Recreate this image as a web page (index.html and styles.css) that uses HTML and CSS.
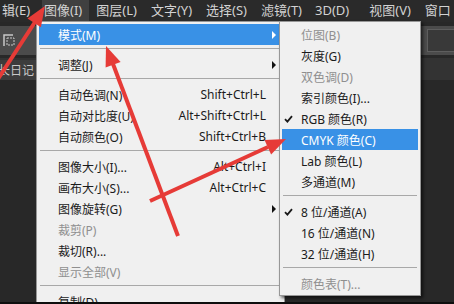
FILE: index.html
```html
<!DOCTYPE html>
<html lang="zh-CN">
<head>
  <meta charset="UTF-8">
  <meta name="viewport" content="width=device-width, initial-scale=1.0">
  <title>图像 - 模式</title>
  <link rel="stylesheet" href="styles.css">
</head>
<body>
  <div class="app">
    <nav class="menubar">
      <span class="bar-item first">辑(E)</span>
      <span class="bar-item active">图像(I)</span>
      <span class="bar-item">图层(L)</span>
      <span class="bar-item">文字(Y)</span>
      <span class="bar-item">选择(S)</span>
      <span class="bar-item tight">滤镜(T)</span>
      <span class="bar-item wide">3D(D)</span>
      <span class="bar-item">视图(V)</span>
      <span class="bar-item">窗口</span>
    </nav>

    <div class="options">
      <svg class="tool-icon" width="12" height="14" viewBox="0 0 12 14">
        <path d="M1 12 V1 H10" fill="none" stroke="#c8c8c8" stroke-width="1.5"/>
        <rect x="4" y="4" width="7" height="7" fill="none" stroke="#c8c8c8" stroke-width="1" stroke-dasharray="2 1"/>
      </svg>
      <span class="options-fill"></span>
      <span class="options-box"></span>
    </div>

    <div class="tabs">
      <span class="tab">长日记</span>
    </div>

    <div class="workspace"></div>

    <!-- 图像 menu -->
    <div class="menu main-menu">
      <div class="row hot"><span class="label">模式(M)</span><span class="caret"></span></div>
      <div class="sep"></div>
      <div class="row"><span class="label">调整(J)</span><span class="caret"></span></div>
      <div class="sep"></div>
      <div class="row"><span class="label">自动色调(N)</span><span class="key">Shift+Ctrl+L</span></div>
      <div class="row"><span class="label">自动对比度(U)</span><span class="key">Alt+Shift+Ctrl+L</span></div>
      <div class="row"><span class="label">自动颜色(O)</span><span class="key">Shift+Ctrl+B</span></div>
      <div class="sep"></div>
      <div class="row"><span class="label">图像大小(I)...</span><span class="key">Alt+Ctrl+I</span></div>
      <div class="row"><span class="label">画布大小(S)...</span><span class="key">Alt+Ctrl+C</span></div>
      <div class="row"><span class="label">图像旋转(G)</span><span class="caret"></span></div>
      <div class="row off"><span class="label">裁剪(P)</span></div>
      <div class="row"><span class="label">裁切(R)...</span></div>
      <div class="row off"><span class="label">显示全部(V)</span></div>
      <div class="sep"></div>
      <div class="row"><span class="label">复制(D)...</span></div>
    </div>

    <!-- 模式 submenu -->
    <div class="menu sub-menu">
      <div class="row off"><span class="check"></span><span class="label">位图(B)</span></div>
      <div class="row"><span class="check"></span><span class="label">灰度(G)</span></div>
      <div class="row off"><span class="check"></span><span class="label">双色调(D)</span></div>
      <div class="row"><span class="check"></span><span class="label">索引颜色(I)...</span></div>
      <div class="row"><span class="check"><svg width="9" height="8" viewBox="0 0 9 8"><path d="M1 4.2 L3.4 6.6 L8 1.2" fill="none" stroke="#1a1a1a" stroke-width="1.8"/></svg></span><span class="label">RGB 颜色(R)</span></div>
      <div class="row hot"><span class="check"></span><span class="label">CMYK 颜色(C)</span></div>
      <div class="row"><span class="check"></span><span class="label">Lab 颜色(L)</span></div>
      <div class="row"><span class="check"></span><span class="label">多通道(M)</span></div>
      <div class="sep"></div>
      <div class="row"><span class="check"><svg width="9" height="8" viewBox="0 0 9 8"><path d="M1 4.2 L3.4 6.6 L8 1.2" fill="none" stroke="#1a1a1a" stroke-width="1.8"/></svg></span><span class="label">8 位/通道(A)</span></div>
      <div class="row"><span class="check"></span><span class="label">16 位/通道(N)</span></div>
      <div class="row"><span class="check"></span><span class="label">32 位/通道(H)</span></div>
      <div class="sep"></div>
      <div class="row off"><span class="check"></span><span class="label">颜色表(T)...</span></div>
    </div>

    <!-- annotation arrows -->
    <svg class="arrows" width="454" height="304" viewBox="0 0 454 304">
      <g fill="#e63b37" stroke="#e63b37">
        <line x1="-2" y1="79" x2="35" y2="22" stroke-width="4"/>
        <polygon points="45,6 40.9,27.2 27.5,18.5" stroke="none"/>
        <line x1="178" y1="236" x2="113" y2="64" stroke-width="4"/>
        <polygon points="106,46 120.6,61.9 105.6,67.5" stroke="none"/>
        <line x1="150" y1="201" x2="268" y2="147" stroke-width="4"/>
        <polygon points="286,139 271.1,154.6 264.5,140" stroke="none"/>
      </g>
    </svg>
  </div>
</body>
</html>
```

FILE: styles.css
```css
/* Page */
body {
  margin: 0;
  background-color: #282828;
  font-family: "Noto Sans", "Noto Sans CJK SC", sans-serif;
}

.app {
  position: relative;
  width: 454px;
  height: 304px;
  box-sizing: border-box;
  border-bottom: 2px solid #0e0e0e;
  overflow: hidden;
  display: flex;
  flex-direction: column;
  background-color: #282828;
}

/* Top menu bar */
.menubar {
  display: flex;
  height: 22px;
  background-color: #2a2a2a;
  color: #d2d2d2;
  font-size: 13px;
  line-height: 21px;
  white-space: nowrap;
}

.bar-item {
  padding: 0 7px;
}

.bar-item.first {
  margin-left: -5px;
}

.bar-item.active {
  background-color: #404040;
  padding-left: 2px;
  margin-left: 5px;
}

.bar-item.tight {
  padding-right: 6px;
}

.bar-item.wide {
  padding-right: 13px;
}

/* Options bar */
.options {
  display: flex;
  align-items: center;
  height: 29px;
  margin-top: 4px;
  background-color: #4b4b4b;
}

.tool-icon {
  margin-left: 3px;
}

.options-fill {
  flex: 1;
}

.options-box {
  width: 26px;
  height: 21px;
  background-color: #393939;
  border: 1px solid #5e5e5e;
  border-right: none;
}

/* Document tabs */
.tabs {
  height: 22px;
  margin-top: 3px;
  background-color: #333333;
}

.tab {
  display: inline-block;
  height: 22px;
  padding: 0 8px 0 0;
  margin-left: -2px;
  background-color: #3c3c3c;
  color: #c8c8c8;
  font-size: 12px;
  line-height: 22px;
}

.workspace {
  flex: 1;
  background-color: #282828;
}

/* Dropdown menus */
.menu {
  position: absolute;
  top: 21px;
  box-sizing: border-box;
  background-color: #f0f0f0;
  border: 1px solid #979797;
  padding: 2px 0;
  font-size: 12px;
  color: #1b1b1b;
}

.main-menu {
  left: 36px;
  width: 249px;
  height: 300px;
}

.sub-menu {
  left: 279px;
  width: 142px;
  padding-bottom: 1px;
  box-shadow: 2px 2px 3px rgba(0, 0, 0, 0.6);
}

.row {
  display: flex;
  align-items: center;
  height: 21px;
  margin: 0 2px;
  white-space: nowrap;
}

.main-menu .row {
  padding: 0 6px 0 19px;
}

.label {
  flex: 1;
}

.key {
  margin-right: 10px;
}

.caret {
  width: 0;
  height: 0;
  border-left: 4px solid #111111;
  border-top: 4px solid transparent;
  border-bottom: 4px solid transparent;
}

.check {
  display: flex;
  align-items: center;
  width: 17px;
  padding-left: 2px;
}

.row.off {
  color: #8f8f8f;
}

.row.hot {
  background-color: #3991e6;
  color: #ffffff;
}

.row.hot .caret {
  border-left-color: #ffffff;
}

.sep {
  height: 9px;
  box-sizing: border-box;
  padding-top: 3px;
  margin: 0 3px;
}

.sep::after {
  content: "";
  display: block;
  border-top: 1px solid #a8a8a8;
}

/* Red annotation arrows */
.arrows {
  position: absolute;
  left: 0;
  top: 0;
  pointer-events: none;
}
```
